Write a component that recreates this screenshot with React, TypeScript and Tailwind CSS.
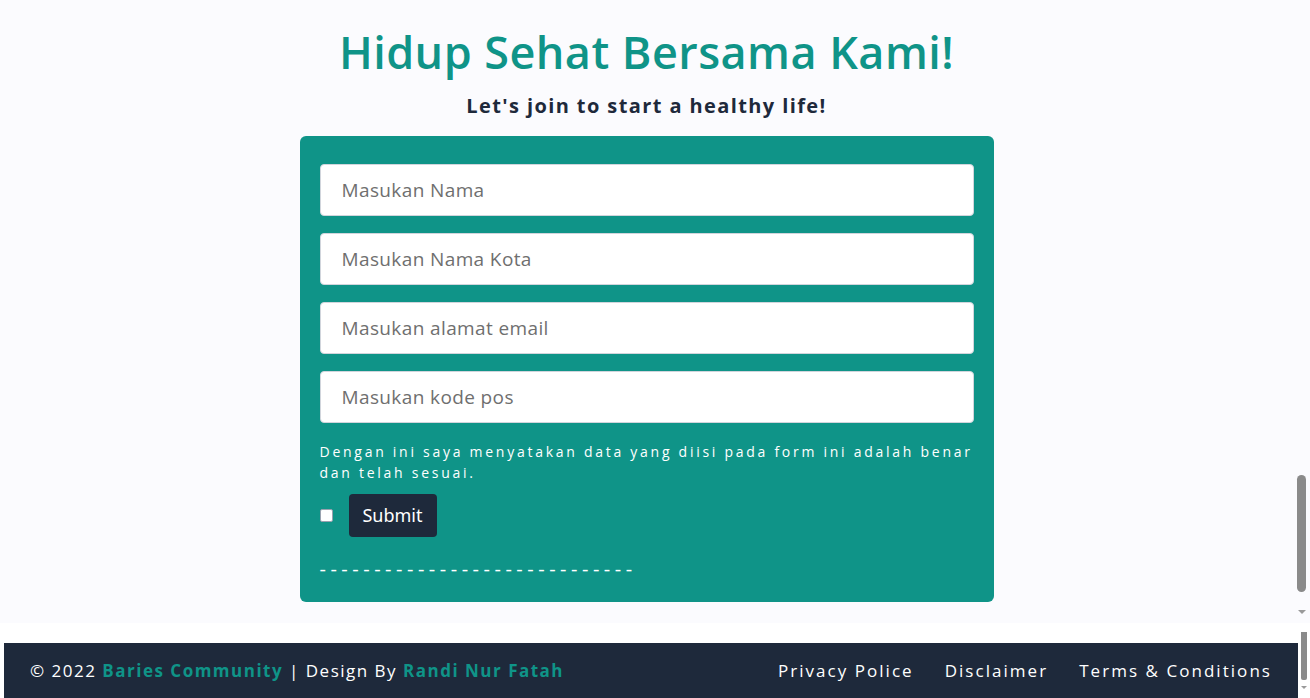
import React from "react";

const font = { fontFamily: '"Open Sans", "Noto Sans", sans-serif' };

function Field({ placeholder }: { placeholder: string }) {
  return (
    <input
      type="text"
      placeholder={placeholder}
      className="h-[52px] w-full rounded-[4px] border border-gray-300 bg-white pl-[21px] text-[19px] tracking-[0.02em] text-gray-700 placeholder:text-[#6f6f6f] outline-none"
      style={font}
    />
  );
}

export default function App() {
  return (
    <div className="h-[698px] w-[1310px] overflow-hidden bg-white" style={font}>
      {/* Top scrolling region */}
      <div className="flex h-[623px] bg-[#fbfbfe]">
        <div className="flex-1 pt-[24px]">
          <h1 className="text-center text-[45px] font-semibold leading-[56px] tracking-[0.01em] text-[#0f9488]">
            Hidup Sehat Bersama Kami!
          </h1>
          <h2 className="mt-[12px] text-center text-[20px] font-bold leading-[28px] tracking-[0.07em] text-[#1e293b]">
            Let's join to start a healthy life!
          </h2>
          <form
            className="mx-auto mt-[16px] flex h-[466px] w-[694px] flex-col rounded-[6px] bg-[#0f9488] px-[20px] pt-[28px]"
            onSubmit={(e) => e.preventDefault()}
          >
            <div className="flex flex-col gap-[17px]">
              <Field placeholder="Masukan Nama" />
              <Field placeholder="Masukan Nama Kota" />
              <Field placeholder="Masukan alamat email" />
              <Field placeholder="Masukan kode pos" />
            </div>
            <p className="mt-[18px] text-[14px] leading-[21px] tracking-[0.195em] text-white">
              Dengan ini saya menyatakan data yang diisi pada form ini adalah benar dan telah sesuai.
            </p>
            <div className="mt-[11px] flex items-center">
              <input type="checkbox" className="h-[13px] w-[13px] appearance-none rounded-[2px] border border-gray-400 bg-white" />
              <button
                type="submit"
                className="ml-[16px] h-[43px] w-[88px] rounded-[4px] bg-[#1e293b] text-[18px] text-white"
                style={{ fontFamily: '"Noto Sans", sans-serif' }}
              >
                Submit
              </button>
            </div>
            <div className="mt-[19px] text-[20px] leading-[26px] tracking-[0.225em] text-white">
              -----------------------------
            </div>
          </form>
        </div>
        {/* scrollbar */}
        <div className="flex w-[17px] flex-col items-start pl-[4px]">
          <div className="mt-[475px] h-[117px] w-[9px] rounded-full bg-[#8a8a8a]" />
          <div className="mt-[18px] h-0 w-0 border-x-[4px] border-t-[4px] border-x-transparent border-t-[#9a9a9a] ml-[1px]" />
        </div>
      </div>
      {/* Bottom region */}
      <div className="flex h-[75px] bg-white">
        <div className="flex-1 pl-[4px] pt-[20px]">
          <footer className="flex h-[55px] w-[1294px] items-center justify-between bg-[#1e293b] px-[26px] text-[17px] text-white">
            <div className="tracking-[0.088em]">
              © 2022 <span className="font-bold text-[#0f9488]">Baries Community</span> | Design By{" "}
              <span className="font-bold text-[#0f9488]">Randi Nur Fatah</span>
            </div>
            <nav className="flex gap-[31px] tracking-[0.12em]">
              <a>Privacy Police</a>
              <a>Disclaimer</a>
              <a>Terms &amp; Conditions</a>
            </nav>
          </footer>
        </div>
        <div className="flex w-[12px] flex-col pl-[3px]">
          <div className="mt-[9px] h-[48px] w-[6px] rounded-b-[2px] bg-[#8a8a8a]" />
          <div className="mt-[6px] h-0 w-0 border-x-[3px] border-t-[3px] border-x-transparent border-t-[#9a9a9a]" />
        </div>
      </div>
    </div>
  );
}
